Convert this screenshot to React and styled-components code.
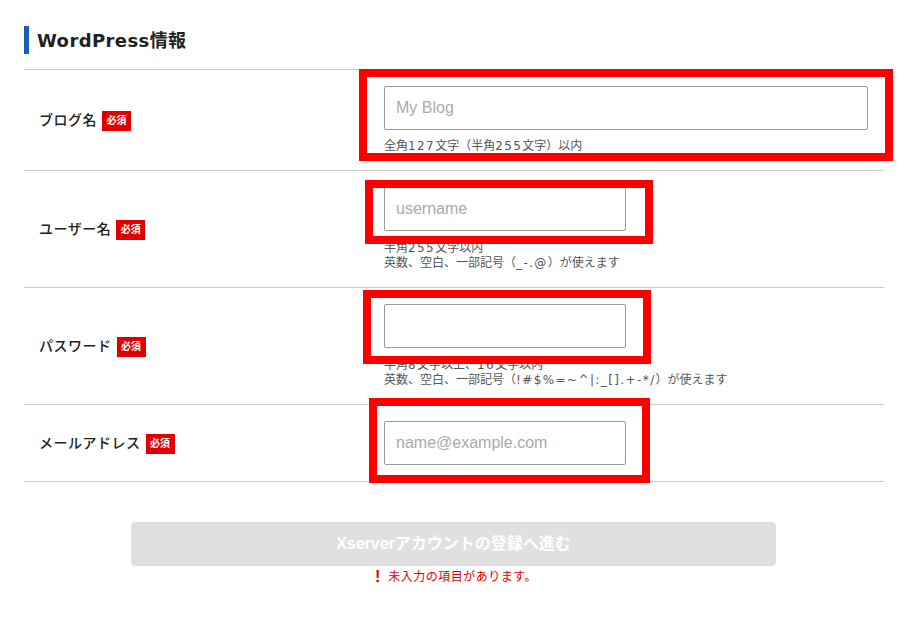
import React from "react";
import styled, { createGlobalStyle } from "styled-components";

const GlobalStyle = createGlobalStyle`
  html, body {
    margin: 0;
    padding: 0;
    background: #fff;
    font-family: "Liberation Sans", "Noto Sans CJK JP", sans-serif;
  }
`;

const Page = styled.div`
  width: 916px;
  height: 633px;
  padding: 26px 32px 0 24px;
  box-sizing: border-box;
  overflow: hidden;
`;

const Heading = styled.h2`
  margin: 0 0 15px;
  height: 28px;
  padding-left: 8px;
  border-left: 5px solid #1560a8;
  font-family: "DejaVu Sans", "Noto Sans CJK JP", sans-serif;
  font-size: 18px;
  line-height: 29px;
  font-weight: 700;
  letter-spacing: 0.4px;
  color: #222;
`;

const Rows = styled.div`
  border-top: 1px solid #ccc;
`;

const Row = styled.div`
  display: flex;
  height: ${(props) => props.$height}px;
  box-sizing: border-box;
  border-bottom: 1px solid #ccc;
`;

const LabelCell = styled.div`
  width: 360px;
  flex-shrink: 0;
  padding: ${(props) => props.$top}px 0 0 15px;
  box-sizing: border-box;
  display: flex;
  align-items: flex-start;
  gap: 5px;
`;

const Label = styled.span`
  font-size: 14px;
  font-weight: 500;
  line-height: 20px;
  letter-spacing: 0.5px;
  color: #222;
`;

const Badge = styled.span`
  width: 29px;
  height: 20px;
  margin-top: 1px;
  background: #e00000;
  color: #fff;
  font-size: 10px;
  font-weight: 700;
  line-height: 20px;
  text-align: center;
`;

const FieldCell = styled.div`
  position: relative;
  flex: 1;
  padding-top: 16px;
`;

const Input = styled.input`
  display: block;
  width: ${(props) => props.$width}px;
  height: 44px;
  margin: 0;
  padding: 0 11px;
  box-sizing: border-box;
  border: 1px solid #999;
  border-radius: 2px;
  background: #fff;
  font-family: inherit;
  font-size: 16px;

  &::placeholder {
    color: #aaa;
    opacity: 1;
  }
`;

const Help = styled.p`
  margin: ${(props) => props.$gap}px 0 0;
  font-family: "DejaVu Sans", "Noto Sans CJK JP", sans-serif;
  font-size: 12px;
  line-height: 15px;
  color: #555;
`;

const HelpLatin = styled.span`
  letter-spacing: 1.4px;
`;

/* annotation frame drawn over the form */
const Highlight = styled.div`
  position: absolute;
  left: ${(props) => props.$left}px;
  top: ${(props) => props.$top}px;
  width: ${(props) => props.$width}px;
  height: ${(props) => props.$height}px;
  box-sizing: border-box;
  border: 8px solid #f00;
  pointer-events: none;
`;

const Footer = styled.div`
  display: flex;
  flex-direction: column;
  align-items: center;
  padding: 40px 0 0;
`;

const SubmitButton = styled.button`
  width: 645px;
  height: 44px;
  margin: 0;
  padding: 0 0 5px;
  align-self: flex-start;
  margin-left: 107px;
  border: none;
  border-radius: 4px;
  background: #e0e0e0;
  color: #fff;
  font-family: inherit;
  font-size: 16px;
  font-weight: 700;
`;

const ErrorText = styled.p`
  display: flex;
  align-items: center;
  gap: 8px;
  margin: 2px 0 0;
  padding-left: 4px;
  font-size: 12px;
  line-height: 18px;
  letter-spacing: 0.5px;
  color: #e00000;
`;

const ErrorMark = styled.span`
  font-size: 16px;
  font-weight: 700;
  letter-spacing: 0;
`;

const rows = [
  {
    label: "ブログ名",
    height: 101,
    labelTop: 40,
    placeholder: "My Blog",
    width: 484,
    gap: 9,
    help: ["全角127文字（半角255文字）以内"],
    frame: { left: -25, top: -1, width: 534, height: 92 },
  },
  {
    label: "ユーザー名",
    height: 117,
    labelTop: 48,
    placeholder: "username",
    width: 242,
    gap: 10,
    help: ["半角255文字以内", "英数、空白、一部記号（_-.@）が使えます"],
    frame: { left: -19, top: 9, width: 288, height: 64 },
  },
  {
    label: "パスワード",
    height: 117,
    labelTop: 48,
    placeholder: "",
    width: 242,
    gap: 10,
    help: ["半角8文字以上、16文字以内", "英数、空白、一部記号（!#$%=~^|:_[].+-*/）が使えます"],
    frame: { left: -21, top: 2, width: 288, height: 74 },
  },
  {
    label: "メールアドレス",
    height: 77,
    labelTop: 28,
    placeholder: "name@example.com",
    width: 242,
    gap: 0,
    help: [],
    frame: { left: -15, top: -7, width: 281, height: 85 },
  },
];

// latin runs are set wider than the Japanese around them
const renderHelpLine = (line) =>
  line
    .split(/([\x21-\x7e]+)/)
    .map((part, index) =>
      index % 2 === 1 ? <HelpLatin key={index}>{part}</HelpLatin> : part
    );

export default function App() {
  return (
    <>
      <GlobalStyle />
      <Page>
        <Heading>WordPress情報</Heading>
        <Rows>
          {rows.map((row) => (
            <Row key={row.label} $height={row.height}>
              <LabelCell $top={row.labelTop}>
                <Label>{row.label}</Label>
                <Badge>必須</Badge>
              </LabelCell>
              <FieldCell>
                <Input placeholder={row.placeholder} $width={row.width} readOnly />
                {row.help.length > 0 && (
                  <Help $gap={row.gap}>
                    {row.help.map((line) => (
                      <React.Fragment key={line}>
                        {renderHelpLine(line)}
                        <br />
                      </React.Fragment>
                    ))}
                  </Help>
                )}
                <Highlight
                  $left={row.frame.left}
                  $top={row.frame.top}
                  $width={row.frame.width}
                  $height={row.frame.height}
                />
              </FieldCell>
            </Row>
          ))}
        </Rows>
        <Footer>
          <SubmitButton type="button" disabled>
            Xserverアカウントの登録へ進む
          </SubmitButton>
          <ErrorText>
            <ErrorMark>!</ErrorMark>
            未入力の項目があります。
          </ErrorText>
        </Footer>
      </Page>
    </>
  );
}
